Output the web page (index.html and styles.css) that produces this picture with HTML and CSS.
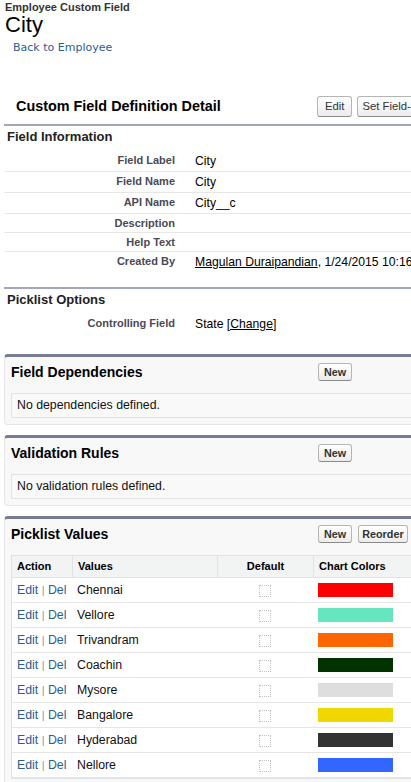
FILE: index.html
```html
<!DOCTYPE html>
<html lang="en">
<head>
<meta charset="utf-8">
<title>City - Employee Custom Field</title>
<link rel="stylesheet" href="styles.css">
</head>
<body>
<div class="page">
  <div class="ph">
    <div class="ph-type">Employee Custom Field</div>
    <div class="ph-title">City</div>
    <a class="back" href="#">Back to Employee</a>
  </div>

  <div class="detail">
    <div class="detail-head">
      <h2 class="detail-title">Custom Field Definition Detail</h2>
      <div class="btns">
        <button class="btn btn-edit">Edit</button>
        <button class="btn btn-plain">Set Field-Level Security</button>
        <button class="btn btn-plain">View Field Accessibility</button>
      </div>
    </div>

    <div class="sub">Field Information</div>
    <div class="rows">
      <div class="row"><div class="lbl">Field Label</div><div class="val">City</div></div>
      <div class="row"><div class="lbl">Field Name</div><div class="val">City</div></div>
      <div class="row"><div class="lbl">API Name</div><div class="val">City__c</div></div>
      <div class="row"><div class="lbl">Description</div><div class="val"></div></div>
      <div class="row"><div class="lbl">Help Text</div><div class="val"></div></div>
      <div class="row"><div class="lbl">Created By</div><div class="val"><a class="ulink" href="#">Magulan Duraipandian</a>, 1/24/2015 10:16 PM</div></div>
    </div>

    <div class="sub">Picklist Options</div>
    <div class="rows">
      <div class="row"><div class="lbl">Controlling Field</div><div class="val">State <a class="ulink" href="#">[Change]</a></div></div>
    </div>
  </div>

  <section class="box">
    <div class="box-head">
      <h3 class="box-title">Field Dependencies</h3>
      <div class="box-btns"><button class="btn btn-new">New</button></div>
    </div>
    <div class="empty">No dependencies defined.</div>
  </section>

  <section class="box">
    <div class="box-head">
      <h3 class="box-title">Validation Rules</h3>
      <div class="box-btns"><button class="btn btn-new">New</button></div>
    </div>
    <div class="empty">No validation rules defined.</div>
  </section>

  <section class="box">
    <div class="box-head">
      <h3 class="box-title">Picklist Values</h3>
      <div class="box-btns"><button class="btn btn-new">New</button><button class="btn btn-re">Reorder</button></div>
    </div>
    <table class="list">
      <colgroup><col class="c1"><col class="c2"><col class="c3"><col class="c4"></colgroup>
      <thead>
        <tr><th>Action</th><th>Values</th><th class="ctr">Default</th><th>Chart Colors</th></tr>
      </thead>
      <tbody>
        <tr><td class="act"><a href="#">Edit</a> <span class="sep">|</span> <a href="#">Del</a></td><td>Chennai</td><td class="ctr"><span class="cb"></span></td><td><span class="swatch" style="background:#ff0000"></span></td></tr>
        <tr><td class="act"><a href="#">Edit</a> <span class="sep">|</span> <a href="#">Del</a></td><td>Vellore</td><td class="ctr"><span class="cb"></span></td><td><span class="swatch" style="background:#66e6be"></span></td></tr>
        <tr><td class="act"><a href="#">Edit</a> <span class="sep">|</span> <a href="#">Del</a></td><td>Trivandram</td><td class="ctr"><span class="cb"></span></td><td><span class="swatch" style="background:#ff6600"></span></td></tr>
        <tr><td class="act"><a href="#">Edit</a> <span class="sep">|</span> <a href="#">Del</a></td><td>Coachin</td><td class="ctr"><span class="cb"></span></td><td><span class="swatch" style="background:#003300"></span></td></tr>
        <tr><td class="act"><a href="#">Edit</a> <span class="sep">|</span> <a href="#">Del</a></td><td>Mysore</td><td class="ctr"><span class="cb"></span></td><td><span class="swatch" style="background:#dedede"></span></td></tr>
        <tr><td class="act"><a href="#">Edit</a> <span class="sep">|</span> <a href="#">Del</a></td><td>Bangalore</td><td class="ctr"><span class="cb"></span></td><td><span class="swatch" style="background:#f0d700"></span></td></tr>
        <tr><td class="act"><a href="#">Edit</a> <span class="sep">|</span> <a href="#">Del</a></td><td>Hyderabad</td><td class="ctr"><span class="cb"></span></td><td><span class="swatch" style="background:#333333"></span></td></tr>
        <tr><td class="act"><a href="#">Edit</a> <span class="sep">|</span> <a href="#">Del</a></td><td>Nellore</td><td class="ctr"><span class="cb"></span></td><td><span class="swatch" style="background:#3366ff"></span></td></tr>
      </tbody>
    </table>
  </section>
</div>
</body>
</html>
```

FILE: styles.css
```css
html, body {
  overflow: hidden;
}
body {
  margin: 0;
  background: #fff;
  color: #000;
  font-family: "Liberation Sans", Arial, sans-serif;
  font-size: 12px;
}
.page {
  width: 640px;
}

/* page header */
.ph {
  padding: 1px 0 0 5px;
}
.ph-type {
  font-size: 11px;
  font-weight: bold;
  line-height: 13px;
  color: #333;
}
.ph-title {
  font-size: 22px;
  line-height: 22px;
  color: #000;
}
.back {
  display: block;
  margin: 5px 0 0 8px;
  font-family: "DejaVu Sans", Verdana, sans-serif;
  font-size: 11px;
  line-height: 14px;
  color: #2a5d97;
  text-decoration: none;
}

/* detail block */
.detail {
  margin: 35px 0 0 4px;
  padding-bottom: 5px;
}
.detail-head {
  display: flex;
  align-items: center;
  padding: 6px 0 7px;
}
.detail-title {
  width: 313px;
  box-sizing: border-box;
  margin: 0;
  padding-left: 12px;
  font-size: 14.4px;
  font-weight: bold;
  line-height: 17px;
}
.btns {
  display: flex;
  gap: 5px;
  white-space: nowrap;
}
.btn {
  font-family: "Liberation Sans", Arial, sans-serif;
  color: #333;
  border: 1px solid #b5b5b5;
  border-bottom-color: #8a8a8a;
  border-radius: 3px;
  background: linear-gradient(#ffffff, #ececec);
  margin: 0;
  white-space: nowrap;
}
.btn-edit, .btn-plain {
  height: 21px;
  font-size: 11.3px;
  font-weight: normal;
  line-height: 17px;
}
.btn-edit {
  padding: 0 7px;
}
.btn-plain {
  padding: 0 4px;
}
.sub {
  border-top: 2px solid #a3a6bf;
  padding: 3px 0 3px 3px;
  font-size: 13px;
  font-weight: bold;
  line-height: 15px;
  color: #222;
}
.rows {
  margin: 4px 0 15px;
}
.row {
  display: flex;
  border-bottom: 1px solid #e7e7e7;
}
.row:last-child {
  border-bottom: 0;
}
.lbl {
  width: 181px;
  flex: none;
  box-sizing: border-box;
  padding: 3px 10px 3px 0;
  text-align: right;
  font-size: 11px;
  font-weight: bold;
  color: #4a4a56;
}
.val {
  padding: 3px 0 3px 10px;
  font-size: 12.2px;
  white-space: nowrap;
}
.ulink {
  color: #000;
  text-decoration: underline;
}

/* related boxes */
.box {
  margin: 0 0 10px 4px;
  padding: 0 0 6px 6px;
  border: 1px solid #e6e6e6;
  border-top: 3px solid #777b93;
  border-radius: 4px;
  background: #f8f8f8;
}
.box-head {
  display: flex;
  align-items: center;
  padding-top: 6px;
  margin-bottom: 12px;
  margin-left: -6px;
}
.box-title {
  width: 313px;
  box-sizing: border-box;
  margin: 0;
  padding-left: 6px;
  font-size: 14px;
  font-weight: bold;
  line-height: 16px;
  color: #000;
}
.box-btns {
  display: flex;
  gap: 6px;
}
.btn-new, .btn-re {
  height: 18px;
  font-size: 10.8px;
  font-weight: bold;
  line-height: 14px;
}
.btn-new {
  padding: 0 5px;
}
.btn-re {
  padding: 0 3px;
}
.empty {
  border: 1px solid #e0e3e5;
  background: #f9f9f9;
  padding: 4px 5px;
  font-size: 12.3px;
  line-height: 15px;
  color: #111;
}

/* picklist table */
.list {
  width: 100%;
  table-layout: fixed;
  border-collapse: separate;
  border-spacing: 0;
  border: 1px solid #e0e3e5;
  background: #fff;
}
.c1 { width: 60px; }
.c2 { width: 145px; }
.c3 { width: 96px; }
.list th {
  background: #f2f3f3;
  border-bottom: 1px solid #e0e3e5;
  padding: 4px 5px;
  font-size: 11px;
  font-weight: bold;
  line-height: 13px;
  text-align: left;
  color: #000;
}
.list th + th {
  border-left: 1px solid #e0e3e5;
}
.list td {
  border-bottom: 1px solid #e6e6e6;
  padding: 5px 5px;
  font-size: 12.3px;
  line-height: 14px;
  color: #111;
  white-space: nowrap;
}
.list th.ctr, .list td.ctr {
  text-align: center;
}
.act a {
  color: #2a5d97;
  text-decoration: none;
}
.sep {
  color: #8a96a8;
  font-size: 11px;
}
.cb {
  display: inline-block;
  width: 10px;
  height: 10px;
  border: 1px dotted #c2c2c2;
  vertical-align: middle;
}
.swatch {
  display: inline-block;
  width: 75px;
  height: 14px;
  vertical-align: middle;
  margin-top: -2px;
}
```
